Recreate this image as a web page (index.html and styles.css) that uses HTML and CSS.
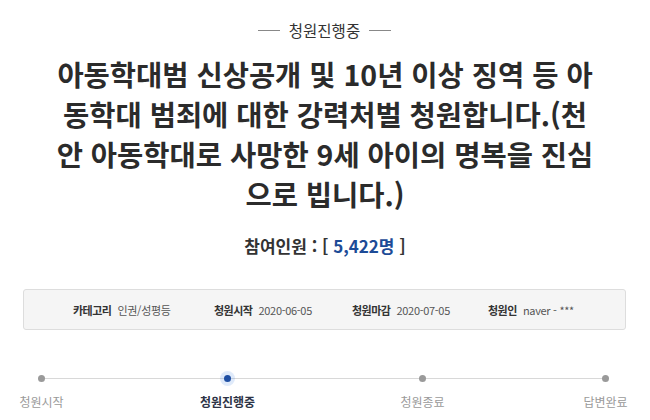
FILE: index.html
```html
<!DOCTYPE html>
<html lang="ko">
<head>
<meta charset="utf-8">
<link rel="stylesheet" href="styles.css">
</head>
<body>
<div class="page">
  <div class="status"><span class="dash"></span><span class="status-text">청원진행중</span><span class="dash"></span></div>
  <h1 class="title">아동학대범 신상공개 및 10년 이상 징역 등 아동학대 범죄에 대한 강력처벌 청원합니다.(천안 아동학대로 사망한 9세 아이의 명복을 진심으로 빕니다.)</h1>
  <p class="count">참여인원 : [ <span class="num">5,422명</span> ]</p>
  <ul class="info">
    <li><b>카테고리</b><span>인권/성평등</span></li>
    <li><b>청원시작</b><span>2020-06-05</span></li>
    <li><b>청원마감</b><span>2020-07-05</span></li>
    <li><b>청원인</b><span>naver - ***</span></li>
  </ul>
  <div class="progress">
    <div class="track"></div>
    <ol class="steps">
      <li class="step"><i class="dot"></i><span>청원시작</span></li>
      <li class="step active"><i class="dot"></i><span>청원진행중</span></li>
      <li class="step"><i class="dot"></i><span>청원종료</span></li>
      <li class="step"><i class="dot"></i><span>답변완료</span></li>
    </ol>
  </div>
</div>
</body>
</html>
```
FILE: styles.css
```css
* { box-sizing: border-box; }
html, body { margin: 0; padding: 0; background: #fff; }
body {
  font-family: "Noto Sans CJK KR", "Noto Sans", sans-serif;
  color: #333;
  width: 650px;
  height: 420px;
  overflow: hidden;
}
.page { padding-top: 20px; }
.status {
  display: flex;
  justify-content: center;
  align-items: center;
  gap: 9px;
  height: 20px;
  margin-left: -1px;
}
.status-text { font-size: 15.5px; line-height: 20px; color: #333; }
.dash { width: 22px; height: 1px; background: #888; }
.title {
  margin: 14px auto 0;
  width: 548px;
  font-size: 28.5px;
  line-height: 40px;
  font-weight: 700;
  text-align: center;
  color: #2b2b2b;
}
.count {
  margin: 20px 0 0;
  text-align: center;
  font-size: 17px;
  line-height: 24px;
  font-weight: 700;
  color: #333;
}
.count .num { color: #1d4b97; }
.info {
  list-style: none;
  margin: 31px 0 0 23px;
  padding: 0 0 0 49px;
  width: 603px;
  height: 41px;
  background: #f5f5f5;
  border: 1px solid #ddd;
  border-radius: 3px;
  display: grid;
  grid-template-columns: 141px 138px 136px auto;
  align-items: center;
  font-size: 11px;
}
.info li { display: flex; gap: 6px; white-space: nowrap; }
.info b { font-weight: 700; color: #333; letter-spacing: -0.5px; }
.info span { color: #555; letter-spacing: -0.3px; }
.progress { position: relative; margin-top: 40px; }
.track {
  position: absolute;
  left: 41px;
  width: 564px;
  top: 8px;
  height: 1px;
  background: #d8d8d8;
}
.steps {
  list-style: none;
  margin: 0;
  padding: 0 0 0 1.5px;
  display: grid;
  grid-template-columns: 186px 195px 183px 80px;
}
.step {
  width: 80px;
  display: flex;
  flex-direction: column;
  align-items: center;
  position: relative;
}
.dot {
  width: 7px;
  height: 7px;
  margin-top: 5px;
  border-radius: 50%;
  background: #9a9a9a;
}
.step span {
  margin-top: 12px;
  font-size: 12px;
  line-height: 16px;
  color: #9a9a9a;
}
.step.active .dot {
  background: #1f4fa3;
  box-shadow: 0 0 0 4px rgba(80, 140, 230, 0.18);
}
.step.active span { color: #2d3446; font-weight: 700; }
```
